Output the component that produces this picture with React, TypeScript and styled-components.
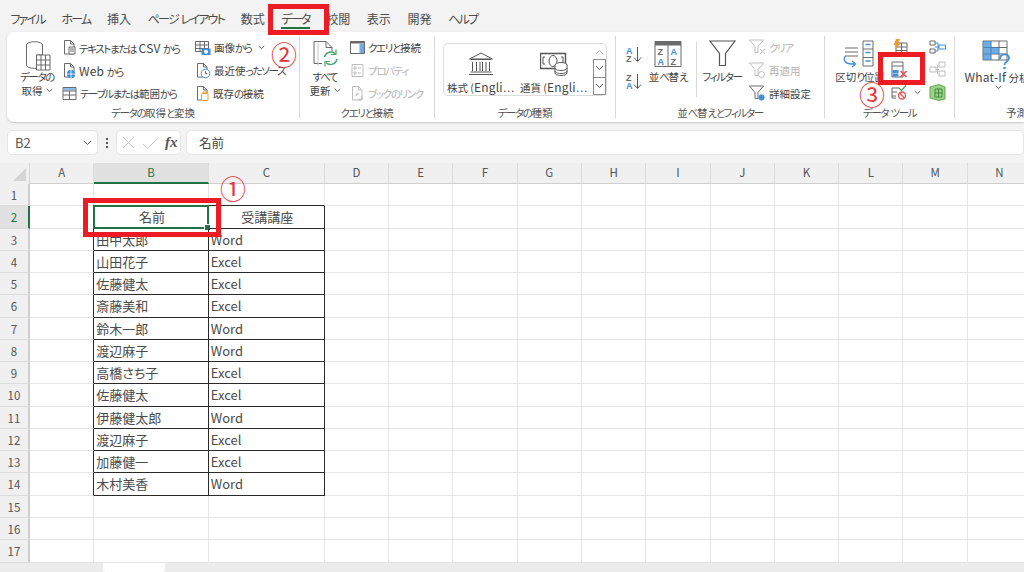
import React from 'react';
import styled, { createGlobalStyle } from 'styled-components';

const FONT = `"Noto Sans CJK JP", "Noto Sans", "Liberation Sans", sans-serif`;
const GRAY = '#6a6a6a';
const BLUE = '#3f8fdc';
const GREEN = '#4aa96c';
const ORANGE = '#ef9a2d';
const RED = '#ed1c24';
const LIGHT = '#bdbdbd';

const GlobalStyle = createGlobalStyle`
  html, body { margin: 0; padding: 0; background: #f3f3f3; }
  body { font-family: ${FONT}; font-feature-settings: "palt"; color: #444; }
`;

const Page = styled.div`
  position: relative;
  width: 1024px;
  height: 572px;
  overflow: hidden;
  display: flex;
  flex-direction: column;
  background: #f3f3f3;
`;

const TabBar = styled.div`
  height: 32px;
  display: flex;
  padding-left: 2px;
`;

const Tab = styled.div<{ $active?: boolean }>`
  position: relative;
  padding: 0 8.35px;
  line-height: 38px;
  font-size: 12px;
  white-space: nowrap;
  color: #4a4a4a;
  &::after {
    content: '';
    display: ${p => (p.$active ? 'block' : 'none')};
    position: absolute;
    left: 8px;
    right: 8px;
    top: 27px;
    height: 2px;
    background: #217346;
  }
`;

// the original UI font has much narrower kana than Noto, and a larger latin
const Kana = styled.span<{ $tight?: number }>`
  letter-spacing: -${p => p.$tight ?? 0.13}em;
`;

const Latin = styled.span`
  font-size: 1.14em;
  letter-spacing: 0.02em;
`;

const Jp = ({ t, tight }: { t: string; tight?: number }) => (
  <span>
    {t
      .split(/([\u3040-\u30ff]+|[A-Za-z][A-Za-z-]*)/)
      .filter(Boolean)
      .map((s, i) => {
        if (/^[\u3040-\u30ff]/.test(s)) return <Kana key={i} $tight={tight}>{s}</Kana>;
        if (/^[A-Za-z]/.test(s)) return <Latin key={i}>{s}</Latin>;
        return s;
      })}
  </span>
);

const Ribbon = styled.div`
  height: 90px;
  margin-left: 7px;
  display: flex;
  background: #fff;
  border-radius: 7px 0 0 7px;
  box-shadow: 0 1px 2px rgba(0, 0, 0, 0.18);
  overflow: hidden;
  flex-shrink: 0;
`;

const Group = styled.div<{ $w: number; $last?: boolean }>`
  width: ${p => p.$w}px;
  box-sizing: border-box;
  flex-shrink: 0;
  margin: 4px 0;
  display: flex;
  flex-direction: column;
  border-right: ${p => (p.$last ? 'none' : '1px solid #d9d9d9')};
`;

const GroupBody = styled.div`
  height: 69px;
  display: flex;
`;

const GroupLabel = styled.div<{ $pad?: number }>`
  height: 13px;
  line-height: 16px;
  font-size: 10.5px;
  color: #555;
  white-space: nowrap;
  text-align: ${p => (p.$pad ? 'left' : 'center')};
  padding-left: ${p => p.$pad ?? 0}px;
`;

const BigButton = styled.div<{ $w: number; $ml?: number }>`
  width: ${p => p.$w}px;
  margin-left: ${p => p.$ml ?? 0}px;
  flex-shrink: 0;
  display: flex;
  flex-direction: column;
  align-items: center;
  padding-top: 4px;
  font-size: 10.5px;
  line-height: 13.5px;
  color: #444;
  white-space: nowrap;
  text-align: center;
`;

const BigIcon = styled.div`
  height: 30px;
  display: flex;
  align-items: flex-start;
  justify-content: center;
`;

const Column = styled.div<{ $w?: number; $ml?: number; $pt?: number }>`
  width: ${p => (p.$w ? `${p.$w}px` : 'auto')};
  margin-left: ${p => p.$ml ?? 0}px;
  padding-top: ${p => p.$pt ?? 0}px;
  flex-shrink: 0;
  display: flex;
  flex-direction: column;
`;

const SmallRow = styled.div<{ $off?: boolean; $h?: number }>`
  height: ${p => p.$h ?? 23}px;
  display: flex;
  align-items: center;
  gap: 3px;
  font-size: 10.5px;
  white-space: nowrap;
  color: ${p => (p.$off ? '#b4b4b4' : '#444')};
`;

const Caret = styled.svg`
  margin-left: 3px;
  flex-shrink: 0;
`;

const Chevron = () => (
  <Caret width="7" height="5" viewBox="0 0 7 5">
    <path d="M.8 1l2.7 2.6L6.2 1" fill="none" stroke="#555" strokeWidth="1" />
  </Caret>
);

const Line = styled.span`
  display: flex;
  align-items: center;
  justify-content: center;
`;

const Gallery = styled.div`
  width: 164px;
  height: 53px;
  margin: 7px 0 0 8px;
  display: flex;
  border: 1px solid #dcdcdc;
  border-radius: 5px;
  box-sizing: border-box;
`;

const GalleryItem = styled.div`
  width: 73px;
  display: flex;
  flex-direction: column;
  align-items: center;
  padding-top: 8px;
  font-size: 10.5px;
  white-space: nowrap;
  color: #444;
  gap: 4px;
  line-height: 14px;
`;

const GalleryScroll = styled.div`
  margin-left: auto;
  width: 13px;
  display: flex;
  flex-direction: column;
`;

const ScrollButton = styled.div<{ $boxed?: boolean }>`
  flex: 1;
  display: flex;
  align-items: center;
  justify-content: center;
  box-sizing: border-box;
  border: ${p => (p.$boxed ? '1px solid #8c8c8c' : 'none')};
  margin-top: ${p => (p.$boxed ? '-1px' : '0')};
`;

const Divider = styled.div`
  width: 1px;
  height: 55px;
  margin: 6px 0 0 3px;
  background: #d9d9d9;
  flex-shrink: 0;
`;

const FormulaBar = styled.div`
  height: 25px;
  margin: 8px 0 0 7px;
  display: flex;
  flex-shrink: 0;
`;

const FormulaBox = styled.div<{ $w?: number; $grow?: boolean; $ml?: number }>`
  width: ${p => (p.$w ? `${p.$w}px` : 'auto')};
  flex: ${p => (p.$grow ? 1 : 'none')};
  margin-left: ${p => p.$ml ?? 0}px;
  box-sizing: border-box;
  display: flex;
  align-items: center;
  background: #fff;
  border: 1px solid #e6e6e6;
  border-radius: 5px;
  font-size: 12.5px;
  color: #444;
`;

const NameText = styled.span`
  padding-left: 7px;
  flex: 1;
  font-size: 13px;
  color: #555;
`;

const NameArrow = styled.span`
  display: flex;
  padding-right: 5px;
`;

const Dots = styled.div`
  width: 18px;
  display: flex;
  flex-direction: column;
  align-items: center;
  justify-content: center;
  gap: 2px;
  span {
    width: 2px;
    height: 2px;
    background: #555;
  }
`;

const FxText = styled.span`
  font-family: "Liberation Serif", serif;
  font-style: italic;
  font-weight: 700;
  font-size: 15px;
  color: #555;
  margin-left: 5px;
`;

const MarkIcon = styled.svg`
  margin-left: 5px;
`;

const FormulaText = styled.span`
  padding-left: 12px;
`;

const Sheet = styled.div`
  margin-top: 8px;
  display: grid;
  grid-template-columns: 30px 64.3px 114.5px 116px repeat(11, 64.3px);
  grid-template-rows: 21px repeat(17, 22.27px);
  background: #fff;
  flex-shrink: 0;
`;

const Corner = styled.div`
  position: relative;
  background: #f0f0f0;
  border-right: 1px solid #d4d4d4;
  &::after {
    content: '';
    position: absolute;
    right: 3px;
    bottom: 3px;
    border-style: solid;
    border-width: 0 0 13px 13px;
    border-color: transparent transparent #d4d4d4 transparent;
  }
`;

const ColHead = styled.div<{ $on?: boolean }>`
  background: ${p => (p.$on ? '#e1e1e1' : '#f0f0f0')};
  color: ${p => (p.$on ? '#217346' : '#555')};
  border-right: 1px solid #dcdcdc;
  border-bottom: ${p => (p.$on ? '2px solid #217346' : '1px solid #cfcfcf')};
  box-sizing: border-box;
  font-size: 11.5px;
  text-align: center;
  line-height: 18px;
`;

const RowHead = styled.div<{ $on?: boolean }>`
  background: ${p => (p.$on ? '#e1e1e1' : '#f0f0f0')};
  color: ${p => (p.$on ? '#217346' : '#555')};
  border-right: ${p => (p.$on ? '2px solid #217346' : '2px solid #cfcfcf')};
  border-bottom: 1px solid #dcdcdc;
  box-sizing: border-box;
  font-size: 11.5px;
  text-align: center;
  line-height: 22px;
`;

const Cell = styled.div<{ $right?: boolean; $bottom?: boolean; $center?: boolean }>`
  position: relative;
  box-sizing: border-box;
  border-right: 1px solid ${p => (p.$right ? '#2a2a2a' : '#e6e6e6')};
  border-bottom: 1px solid ${p => (p.$bottom ? '#2a2a2a' : '#e6e6e6')};
  font-size: 13px;
  line-height: 22px;
  padding-left: 2px;
  color: #4a4a4a;
  white-space: nowrap;
  text-align: ${p => (p.$center ? 'center' : 'left')};
`;

const Selection = styled.div`
  position: absolute;
  inset: -1px -1px -1px -1px;
  border: 2px solid #217346;
  &::after {
    content: '';
    position: absolute;
    right: -4px;
    bottom: -4px;
    width: 5px;
    height: 5px;
    background: #217346;
    border: 1px solid #fff;
  }
`;

const SheetTabs = styled.div`
  flex: 1;
  display: flex;
  background: #ececec;
  padding-left: 103px;
`;

const SheetTab = styled.div`
  width: 62px;
  background: #fff;
  border-radius: 0 0 3px 3px;
`;

const RedBox = styled.div<{ $x: number; $y: number; $w: number; $h: number }>`
  position: absolute;
  left: ${p => p.$x}px;
  top: ${p => p.$y}px;
  width: ${p => p.$w}px;
  height: ${p => p.$h}px;
  box-sizing: border-box;
  border: 5px solid ${RED};
`;

const Badge = styled.div<{ $x: number; $y: number }>`
  position: absolute;
  left: ${p => p.$x}px;
  top: ${p => p.$y}px;
  width: 26px;
  height: 26px;
  font-size: 26px;
  line-height: 26px;
  text-align: center;
  color: #e8333a;
`;

/* ribbon icons */
const Doc = ({ c = GRAY }: { c?: string }) => (
  <path d="M2.5 1.5h6l3.5 3.5v10h-9.5zM8.5 1.5v3.5h3.5" fill="#fff" stroke={c} strokeWidth="1" />
);

const IconText = () => (
  <svg width="14" height="17" viewBox="0 0 14 17">
    <Doc />
    <path d="M7 8h6v7H7z" fill="#fff" stroke={GRAY} />
    <path d="M8 10h4M8 12h4" stroke={GRAY} />
  </svg>
);

const IconWeb = () => (
  <svg width="14" height="17" viewBox="0 0 14 17">
    <Doc />
    <circle cx="9" cy="12" r="4.2" fill={BLUE} />
    <path d="M5 12h8M9 8v8" stroke="#fff" strokeWidth=".8" />
  </svg>
);

const IconTable = () => (
  <svg width="15" height="15" viewBox="0 0 15 15">
    <path d="M1 1.5h13v12H1z" fill="#fff" stroke={GRAY} />
    <path d="M1.5 2h12v2.5h-12z" fill={BLUE} opacity=".6" />
    <path d="M1 5h13M1 9h13M7.5 5v8.5" stroke={GRAY} />
  </svg>
);

const IconImage = () => (
  <svg width="16" height="16" viewBox="0 0 16 16">
    <path d="M.5 1.5h13v10H.5zM.5 5h13M.5 8.5h13M5 1.5v10M9.5 1.5v10" fill="#fff" stroke={GRAY} />
    <path d="M6.5 8.5h9v6.5h-9z" fill={BLUE} />
    <circle cx="11" cy="11.7" r="2" fill="#fff" />
  </svg>
);

const IconRecent = () => (
  <svg width="16" height="17" viewBox="0 0 16 17">
    <Doc />
    <circle cx="10.5" cy="11.5" r="4.3" fill="#fff" stroke={BLUE} />
    <path d="M10.5 9v2.7h2" fill="none" stroke={GRAY} />
  </svg>
);

const IconExisting = () => (
  <svg width="15" height="17" viewBox="0 0 15 17">
    <Doc />
    <rect x="6.5" y="8.5" width="6.5" height="7" rx="1" fill="#fff" stroke={ORANGE} />
    <path d="M8 8.5V7h3.500v1.500" fill="none" stroke={ORANGE} />
  </svg>
);

const IconGetData = () => (
  <svg width="30" height="31" viewBox="0 0 30 31">
    <ellipse cx="12.500" cy="5" rx="8" ry="3.300" fill="#fff" stroke={GRAY} />
    <path d="M4.500 5v20c0 2 3.500 3.300 8 3.300h2V15h6V5" fill="#fff" stroke={GRAY} />
    <path d="M14.500 15h13.500v15H14.500zM14.500 20h13.500M14.500 25h13.500M19 15v15M23.500 15v15" fill="#fff" stroke={GRAY} />
  </svg>
);

const IconRefresh = () => (
  <svg width="28" height="28" viewBox="0 0 28 28">
    <path d="M3 1.500h12l6 6V12M3 1.500v22h8" fill="none" stroke={GRAY} />
    <path d="M7 4v22" stroke="#c5c5c5" />
    <path d="M15 1.500v6h6" fill="none" stroke={GRAY} />
    <path d="M13.500 17a6.500 6.500 0 0 1 11-3M26 19a6.500 6.500 0 0 1-11 3.500" fill="none" stroke={GREEN} strokeWidth="1.500" />
    <path d="M25 9.500v5h-5M14 26.500v-5h5" fill="none" stroke={GREEN} strokeWidth="1.200" />
  </svg>
);

const IconQuery = () => (
  <svg width="15" height="15" viewBox="0 0 15 15">
    <path d="M.5 1.500h14v12H.5z" fill="#fff" stroke={GRAY} />
    <path d="M.5 1.500h14v2H.5z" fill={GRAY} />
    <path d="M9.500 4h4.500v9H9.500z" fill={BLUE} opacity=".75" />
  </svg>
);

const IconProps = () => (
  <svg width="15" height="15" viewBox="0 0 15 15">
    <path d="M2 1.500h11v12H2z" fill="#fff" stroke={LIGHT} />
    <path d="M4 4h2v2H4zM4 9h2v2H4zM8 5h3M8 10h3" fill="none" stroke={LIGHT} />
  </svg>
);

const IconBookLink = () => (
  <svg width="15" height="17" viewBox="0 0 15 17">
    <Doc c={LIGHT} />
    <path d="M6 11a2 2 0 0 1 3-2M11.500 11a2 2 0 0 1-3 3" fill="none" stroke={LIGHT} strokeWidth="1.200" />
  </svg>
);

const IconBank = () => (
  <svg width="26" height="24" viewBox="0 0 26 24">
    <path d="M13 1L1.500 7h23z" fill="#fff" stroke="#555" />
    <path d="M3 7.500h20M4.500 10v9M8.500 10v9M12 10v9M14.500 10v9M18 10v9M21.500 10v9M2.500 20h21M1 22.500h24" fill="none" stroke="#555" />
  </svg>
);

const IconMoney = () => (
  <svg width="28" height="24" viewBox="0 0 28 24">
    <path d="M.500 1.500h25v15H.500z" fill="#fff" stroke="#555" strokeWidth="1.400" />
    <path d="M5 5H3v7h2M21 5h2v7h-2" fill="none" stroke="#555" />
    <ellipse cx="13" cy="9" rx="4" ry="5.500" fill="none" stroke="#555" />
    <ellipse cx="21" cy="13" rx="6" ry="2.500" fill="#fff" stroke="#555" />
    <path d="M15 13v8c0 1.500 2.500 2.500 6 2.500s6-1 6-2.500v-8" fill="#fff" stroke="#555" />
    <path d="M15 16c0 1.500 2.500 2.500 6 2.500s6-1 6-2.500M15 19c0 1.500 2.500 2.500 6 2.500s6-1 6-2.500" fill="none" stroke="#555" />
  </svg>
);

const SortAZ = ({ down }: { down?: boolean }) => (
  <svg width="18" height="17" viewBox="0 0 18 17">
    <text x="1" y="7.500" fontSize="9" fontWeight="700" fontFamily="Liberation Sans" fill={down ? GRAY : BLUE}>{down ? 'Z' : 'A'}</text>
    <text x="1" y="15.500" fontSize="9" fontWeight="700" fontFamily="Liberation Sans" fill={down ? BLUE : GRAY}>{down ? 'A' : 'Z'}</text>
    <path d="M12.500 1v14M9 11.500l3.500 4 3.500-4" fill="none" stroke="#555" />
  </svg>
);

const IconSort = () => (
  <svg width="28" height="28" viewBox="0 0 28 28">
    <path d="M1 1.500h26v25H1z" fill="#fff" stroke={GRAY} />
    <path d="M1 1.500h26v4H1z" fill={GRAY} />
    <path d="M14 5v22" stroke={GRAY} />
    <text x="3.500" y="15" fontSize="9" fontWeight="700" fontFamily="Liberation Sans" fill={GRAY}>Z</text>
    <text x="3.500" y="24.500" fontSize="9" fontWeight="700" fontFamily="Liberation Sans" fill={BLUE}>A</text>
    <text x="16.500" y="15" fontSize="9" fontWeight="700" fontFamily="Liberation Sans" fill={BLUE}>A</text>
    <text x="16.500" y="24.500" fontSize="9" fontWeight="700" fontFamily="Liberation Sans" fill={GRAY}>Z</text>
  </svg>
);

const IconFilter = () => (
  <svg width="27" height="27" viewBox="0 0 27 27">
    <path d="M1 1h25L16.500 13.500V25.500h-6V13.500z" fill="#fff" stroke="#555" strokeWidth="1.200" />
  </svg>
);

const SmallFunnel = ({ c, children }: { c: string; children?: React.ReactNode }) => (
  <svg width="17" height="17" viewBox="0 0 17 17">
    <path d="M.5 1h14L9 7.500v6H6v-6z" fill="#fff" stroke={c} />
    {children}
  </svg>
);

const IconSplit = () => (
  <svg width="36" height="28" viewBox="0 0 36 28">
    <path d="M3 8h13M3 12h13M3 16h13" stroke={GRAY} />
    <path d="M21 1h10v25H21zM21 9h10M21 17.500h10" fill="#fff" stroke={GRAY} />
    <path d="M23.500 4.500h5M23.500 12.500h5M23.500 21h5" stroke={BLUE} strokeWidth="1.500" />
    <path d="M3.500 16c-3 4 0 8 6 8h4M10 21l3.500 3-3.500 3" fill="none" stroke={BLUE} strokeWidth="1.300" />
  </svg>
);

const IconFlash = () => (
  <svg width="17" height="16" viewBox="0 0 17 16">
    <path d="M5 4h11v11H5zM5 8h11M5 11.500h11M10.500 4v11" fill="#fff" stroke={GRAY} />
    <path d="M5 0h4L7 4h3l-6 7 1.500-5H2.500z" fill={ORANGE} />
  </svg>
);

const IconDuplicates = () => (
  <svg width="18" height="17" viewBox="0 0 18 17">
    <path d="M1 1h11v15H1zM1 5h11" fill="#fff" stroke={GRAY} />
    <path d="M1.500 9h6v3h-6zM1.500 12.500h6v3h-6z" fill={BLUE} />
    <path d="M9.500 10l6 6M15.500 10l-6 6" stroke="#e8555a" strokeWidth="1.700" />
  </svg>
);

const IconValidate = () => (
  <svg width="17" height="15" viewBox="0 0 17 15">
    <path d="M1 3h7M1 7h5M1 3v10h4M1 11h4" fill="none" stroke={GRAY} />
    <path d="M8 3l2.500 2.500L15 .5" fill="none" stroke={GREEN} strokeWidth="1.300" />
    <circle cx="11" cy="10.500" r="3.500" fill="#fff" stroke="#e2524f" strokeWidth="1.300" />
    <path d="M8.500 8l5 5" stroke="#e2524f" strokeWidth="1.300" />
  </svg>
);

const IconConsolidate = () => (
  <svg width="17" height="14" viewBox="0 0 17 14">
    <path d="M1 1h5v4H1zM1 9h5v4H1z" fill="#fff" stroke={GRAY} />
    <path d="M6 3h3v8H6M6 7h4" fill="none" stroke={BLUE} />
    <path d="M10 5h6.500v4H10z" fill="#fff" stroke={BLUE} />
  </svg>
);

const IconRelations = () => (
  <svg width="17" height="16" viewBox="0 0 17 16">
    <path d="M1 6h6v5H1zM10 1h6v5h-6zM10 10h6v5h-6zM7 8.500h3M8.500 3.500v9.500" fill="#fff" stroke={LIGHT} />
  </svg>
);

const IconPower = () => (
  <svg width="17" height="17" viewBox="0 0 17 17">
    <path d="M1 3l9-2.500 6 2.500v12l-6 1.500-9-2.500z" fill="#9ccf8a" stroke="#5aa84a" />
    <path d="M6 5h7v8H6zM9.500 5v8M6 9h7" fill="none" stroke="#3f8a3a" />
  </svg>
);

const IconWhatIf = () => (
  <svg width="30" height="30" viewBox="0 0 30 30">
    <path d="M1 1h24v19H1zM1 7.500h24M1 14h24M9 1v19M17 1v19" fill="#fff" stroke={GRAY} />
    <path d="M1 1h8v19H1zM9 7.500h8V14H9z" fill={BLUE} opacity=".75" />
    <path d="M18 19c0-6 9-6 9-1 0 4-4.500 3.500-4.500 7" fill="none" stroke={BLUE} strokeWidth="1.800" />
    <circle cx="22.500" cy="28" r="1.300" fill={BLUE} />
  </svg>
);

const Arrow = ({ up, c = '#555' }: { up?: boolean; c?: string }) => (
  <svg width="9" height="6" viewBox="0 0 9 6">
    <path d={up ? 'M1 5l3.500-3.500L8 5' : 'M1 1l3.500 3.500L8 1'} fill="none" stroke={c} />
  </svg>
);

const TABS = ['ファイル', 'ホーム', '挿入', 'ページ レイアウト', '数式', 'データ', '校閲', '表示', '開発', 'ヘルプ'];
const COLS = ['A', 'B', 'C', 'D', 'E', 'F', 'G', 'H', 'I', 'J', 'K', 'L', 'M', 'N'];
const PEOPLE: [string, string][] = [
  ['名前', '受講講座'],
  ['田中太郎', 'Word'],
  ['山田花子', 'Excel'],
  ['佐藤健太', 'Excel'],
  ['斎藤美和', 'Excel'],
  ['鈴木一郎', 'Word'],
  ['渡辺麻子', 'Word'],
  ['高橋さち子', 'Excel'],
  ['佐藤健太', 'Excel'],
  ['伊藤健太郎', 'Word'],
  ['渡辺麻子', 'Excel'],
  ['加藤健一', 'Excel'],
  ['木村美香', 'Word'],
];

const renderCell = (row: number, col: number) => {
  const inTable = row >= 2 && row <= 14;
  const person = inTable ? PEOPLE[row - 2] : null;
  const text = person && (col === 1 || col === 2) ? person[col - 1] : '';
  const right = inTable && (col === 0 || col === 1 || col === 2);
  const bottom = (col === 1 || col === 2) && row >= 1 && row <= 14;
  return (
    <Cell key={`${row}-${col}`} $right={right} $bottom={bottom} $center={row === 2}>
      {text}
      {row === 2 && col === 1 && <Selection />}
    </Cell>
  );
};

export default function App() {
  return (
    <Page>
      <GlobalStyle />
      <TabBar>
        {TABS.map(t => (
          <Tab key={t} $active={t === 'データ'}><Jp t={t} tight={0.15} /></Tab>
        ))}
      </TabBar>

      <Ribbon>
        <Group $w={293}>
          <GroupBody>
            <BigButton $w={50} $ml={5}>
              <BigIcon><IconGetData /></BigIcon>
              <Jp t="データの" />
              <Line>取得<Chevron /></Line>
            </BigButton>
            <Column $w={133}>
              <SmallRow><IconText /><Jp t="テキストまたは CSV から" /></SmallRow>
              <SmallRow><IconWeb /><Jp t="Web から" /></SmallRow>
              <SmallRow><IconTable /><Jp t="テーブルまたは範囲から" /></SmallRow>
            </Column>
            <Column>
              <SmallRow><IconImage /><Jp t="画像から" /><Chevron /></SmallRow>
              <SmallRow><IconRecent /><Jp t="最近使ったソース" /></SmallRow>
              <SmallRow><IconExisting /><Jp t="既存の接続" /></SmallRow>
            </Column>
          </GroupBody>
          <GroupLabel><Jp t="データの取得と変換" /></GroupLabel>
        </Group>

        <Group $w={135}>
          <GroupBody>
            <BigButton $w={50}>
              <BigIcon><IconRefresh /></BigIcon>
              <Jp t="すべて" />
              <Line>更新<Chevron /></Line>
            </BigButton>
            <Column>
              <SmallRow><IconQuery /><Jp t="クエリと接続" /></SmallRow>
              <SmallRow $off><IconProps /><Jp t="プロパティ" /></SmallRow>
              <SmallRow $off><IconBookLink /><Jp t="ブックのリンク" /></SmallRow>
            </Column>
          </GroupBody>
          <GroupLabel><Jp t="クエリと接続" /></GroupLabel>
        </Group>

        <Group $w={181}>
          <GroupBody>
            <Gallery>
              <GalleryItem><IconBank /><Jp t="株式 (Engli…" /></GalleryItem>
              <GalleryItem><IconMoney /><Jp t="通貨 (Engli…" /></GalleryItem>
              <GalleryScroll>
                <ScrollButton><Arrow up c="#bbb" /></ScrollButton>
                <ScrollButton $boxed><Arrow /></ScrollButton>
                <ScrollButton $boxed><Arrow /></ScrollButton>
              </GalleryScroll>
            </Gallery>
          </GroupBody>
          <GroupLabel><Jp t="データの種類" /></GroupLabel>
        </Group>

        <Group $w={209}>
          <GroupBody>
            <Column $w={18} $ml={9} $pt={5}>
              <SmallRow $h={27}><SortAZ /></SmallRow>
              <SmallRow $h={27}><SortAZ down /></SmallRow>
            </Column>
            <BigButton $w={50}>
              <BigIcon><IconSort /></BigIcon>
              <Jp t="並べ替え" />
            </BigButton>
            <Divider />
            <BigButton $w={50}>
              <BigIcon><IconFilter /></BigIcon>
              <Jp t="フィルター" />
            </BigButton>
            <Column $ml={2}>
              <SmallRow $off><SmallFunnel c={LIGHT}><path d="M11 10l5 5M16 10l-5 5" stroke={LIGHT} /></SmallFunnel><Jp t="クリア" /></SmallRow>
              <SmallRow $off><SmallFunnel c={LIGHT}><circle cx="12.500" cy="12.500" r="3" fill="none" stroke={LIGHT} /></SmallFunnel><Jp t="再適用" /></SmallRow>
              <SmallRow><SmallFunnel c={GRAY}><circle cx="12.500" cy="12.500" r="3" fill={BLUE} /></SmallFunnel><Jp t="詳細設定" /></SmallRow>
            </Column>
          </GroupBody>
          <GroupLabel><Jp t="並べ替えとフィルター" /></GroupLabel>
        </Group>

        <Group $w={130}>
          <GroupBody>
            <BigButton $w={62} $ml={4}>
              <BigIcon><IconSplit /></BigIcon>
              <Jp t="区切り位置" />
            </BigButton>
            <Column $w={38}>
              <SmallRow $h={22}><IconFlash /></SmallRow>
              <SmallRow $h={22}><IconDuplicates /></SmallRow>
              <SmallRow $h={25}><IconValidate /><Chevron /></SmallRow>
            </Column>
            <Column>
              <SmallRow $h={22}><IconConsolidate /></SmallRow>
              <SmallRow $h={22}><IconRelations /></SmallRow>
              <SmallRow $h={25}><IconPower /></SmallRow>
            </Column>
          </GroupBody>
          <GroupLabel><Jp t="データ ツール" /></GroupLabel>
        </Group>

        <Group $w={69} $last>
          <GroupBody>
            <BigButton $w={84}>
              <BigIcon><IconWhatIf /></BigIcon>
              <Jp t="What-If 分析" />
              <Line><Chevron /></Line>
            </BigButton>
          </GroupBody>
          <GroupLabel $pad={51}>予測</GroupLabel>
        </Group>
      </Ribbon>

      <FormulaBar>
        <FormulaBox $w={91}>
          <NameText>B2</NameText>
          <NameArrow><Arrow /></NameArrow>
        </FormulaBox>
        <Dots><span /><span /><span /></Dots>
        <FormulaBox $w={65}>
          <MarkIcon width="38" height="14" viewBox="0 0 38 14">
            <path d="M1 1l11 11M12 1L1 12" stroke="#c4c4c4" />
            <path d="M21 8l4.500 4.500L36 2" fill="none" stroke="#c4c4c4" />
          </MarkIcon>
          <FxText>fx</FxText>
        </FormulaBox>
        <FormulaBox $grow $ml={5}>
          <FormulaText>名前</FormulaText>
        </FormulaBox>
      </FormulaBar>

      <Sheet>
        <Corner />
        {COLS.map(c => (
          <ColHead key={c} $on={c === 'B'}>{c}</ColHead>
        ))}
        {Array.from({ length: 17 }, (_, i) => i + 1).map(row => (
          <React.Fragment key={row}>
            <RowHead $on={row === 2}>{row}</RowHead>
            {COLS.map((_, col) => renderCell(row, col))}
          </React.Fragment>
        ))}
      </Sheet>

      <SheetTabs><SheetTab /></SheetTabs>

      <RedBox $x={268} $y={4} $w={61} $h={31} />
      <RedBox $x={83} $y={198} $w={138} $h={39} />
      <RedBox $x={878} $y={52} $w={47} $h={33} />
      <Badge $x={271} $y={41}>②</Badge>
      <Badge $x={859} $y={81}>③</Badge>
      <Badge $x={220} $y={175}>①</Badge>
    </Page>
  );
}
